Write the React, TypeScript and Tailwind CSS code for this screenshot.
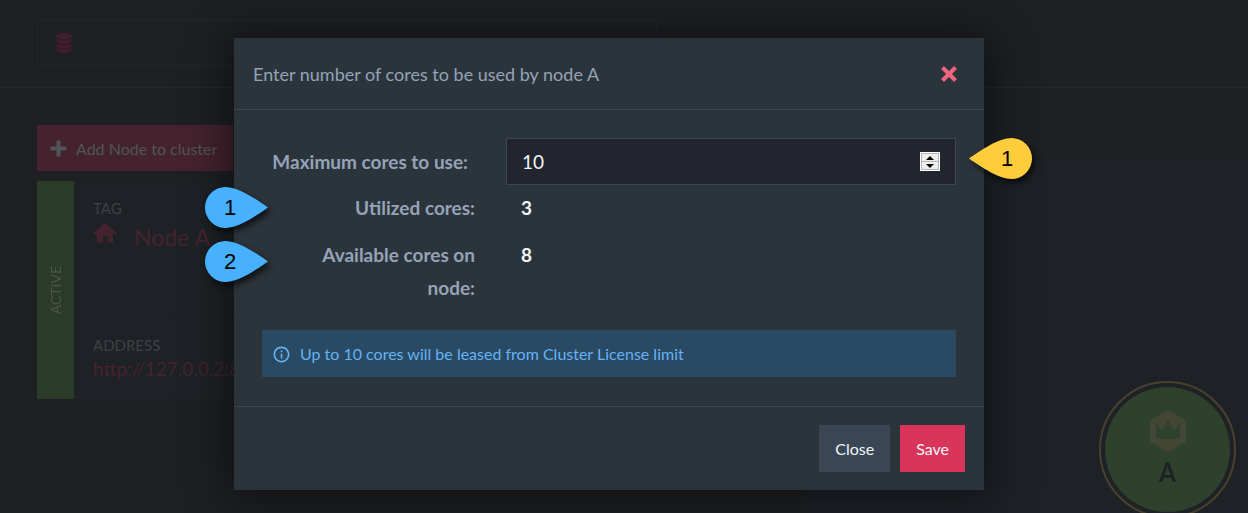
import { useState } from "react";
import type { ReactNode } from "react";
import { MdInfoOutline } from "react-icons/md";

function DatabaseIcon() {
  return (
    <svg viewBox="0 0 16 20" className="h-5 w-4" fill="currentColor" aria-hidden="true">
      <ellipse cx="8" cy="3.2" rx="7.8" ry="3.2" />
      <path d="M.2 5.2C2 6.800 5 7.400 8 7.400s6-.6 7.800-2.200v2.600C15.800 9.800 12 11 8 11S.2 9.800 .2 7.800z" />
      <path d="M.2 9.800C2 11.400 5 12 8 12s6-.6 7.800-2.200v2.600c0 2-3.800 3.200-7.800 3.200s-7.800-1.200-7.800-3.200z" />
      <path d="M.2 14.400C2 15.900 5 16.500 8 16.500s6-.6 7.800-2.100v2.400c0 2-3.800 3.200-7.800 3.200s-7.800-1.200-7.800-3.200z" />
    </svg>
  );
}

function PlusIcon() {
  return (
    <svg viewBox="0 0 17 17" className="size-[17px]" fill="currentColor" aria-hidden="true">
      <path d="M7 .5h3q.5 0 .5.500V6.500H16q.5 0 .5.500v3q0 .5-.5.500h-5.500V16q0 .5-.5.500H7q-.5 0-.5-.5v-5.500H1Q.5 10.500 .5 10V7q0-.5.5-.5h5.500V1q0-.5.5-.5z" />
    </svg>
  );
}

function HomeIcon() {
  return (
    <svg viewBox="0 0 24 20" className="h-5 w-6" fill="currentColor" aria-hidden="true">
      <path d="M12 0 24 10.500V11H20V19.500H14.500V13H10V19.500H4V11H0V10.500z" />
    </svg>
  );
}

function CrossIcon() {
  return (
    <svg viewBox="0 0 16 16" className="size-4 overflow-visible" fill="none" stroke="currentColor" strokeWidth="4" aria-hidden="true">
      <path d="M1.500 1.500 14.500 14.500M14.500 1.500 1.500 14.500" />
    </svg>
  );
}

function Callout({ label, place, tone, flip }: { label: string; place: string; tone: string; flip?: boolean }) {
  return (
    <div className={`absolute z-10 h-[41px] w-[63px] ${place}`}>
      <svg
        viewBox="0 0 63 41"
        className={`absolute inset-0 overflow-visible drop-shadow-[3px_4px_3px_rgba(0,0,0,0.65)] ${tone}`}
        fill="currentColor"
        aria-hidden="true"
      >
        {flip ? (
          <path d="M0 20.500C12 12 30 0 42.500 0a20.500 20.500 0 0 1 0 41C30 41 12 29 0 20.500z" />
        ) : (
          <path d="M63 20.500C51 12 33 0 20.500 0a20.500 20.500 0 0 0 0 41C33 41 51 29 63 20.500z" />
        )}
      </svg>
      <span
        className={`absolute inset-y-0 flex w-[50px] items-center justify-center font-['Liberation_Sans',sans-serif] text-[22px] font-normal text-black ${
          flip ? "right-0" : "left-0"
        }`}
      >
        {label}
      </span>
    </div>
  );
}

function InfoRow({ label, value, callout }: { label: string; value: string; callout: ReactNode }) {
  return (
    <div className="relative flex pt-[6px] pb-2 text-[19px] leading-[33px] font-bold">
      <dt className="w-[213px] pl-8 text-right text-[#94a3b8]">{label}</dt>
      <dd className="pl-[46px] text-[#f1f5f9]">{value}</dd>
      {callout}
    </div>
  );
}

function PageBehind() {
  return (
    <div className="flex min-h-screen flex-col" aria-hidden="true">
      <header className="border-b border-[#24272c] px-[37px] pt-5 pb-[21px]">
        <div className="flex h-[46px] max-w-[620px] items-center border border-[#22272d] pl-[18px] text-[#441c2c]">
          <DatabaseIcon />
        </div>
      </header>
      <main className="flex grow">
        <section className="w-[803px] px-[37px] pt-[37px]">
          <button
            type="button"
            tabIndex={-1}
            className="flex h-[46px] w-[196px] items-center gap-[9px] bg-[#45232e] pt-px pl-[13px] text-[16px] text-[#515456]"
          >
            <PlusIcon />
            Add Node to cluster
          </button>
          <article className="mt-[10px] flex h-[218px] bg-[#1e2226] text-[#3d4145]">
            <div className="flex w-[37px] items-center justify-center bg-[#2a3b2a] text-[#4b554c]">
              <span className="rotate-180 text-[14px] leading-5 [writing-mode:vertical-rl]">ACTIVE</span>
            </div>
            <div className="flex grow flex-col">
              <div className="h-[134px] border-b border-[#1d2024] pt-[15px] pl-[19px]">
                <div className="text-[15px] leading-6">TAG</div>
                <div className="flex items-start gap-[17px] pt-[3px] text-[23px] text-[#45232e]">
                  <HomeIcon />
                  <span className="leading-7">Node A</span>
                </div>
              </div>
              <div className="pt-[18px] pl-[19px]">
                <div className="text-[15px] leading-6">ADDRESS</div>
                <div className="text-[19px] leading-6 text-[#45232e]">http://127.0.0.2:8080</div>
              </div>
            </div>
          </article>
        </section>
        <section className="mt-[73px] flex grow items-end justify-end overflow-hidden bg-[#1e2227] pr-3">
          <div className="-mb-[5px] flex size-[137px] items-center justify-center rounded-full border-2 border-[#4a402e]">
            <div className="flex size-[125px] flex-col items-center rounded-full bg-[#2d412d] pt-[23px] text-[#1e2227]">
              <svg viewBox="0 0 36 42" className="h-[42px] w-9" aria-hidden="true">
                <path d="M18 0 36 10.500v21L18 42 0 31.500v-21z" fill="#424632" />
                <path d="M6 13.500 12 21 18 10.500 24 21 30 13.500V29H6z" fill="#2d412d" />
              </svg>
              <span className="mt-[3px] font-['Roboto',sans-serif] text-[27px] leading-9 font-medium">A</span>
            </div>
          </div>
        </section>
      </main>
    </div>
  );
}

export default function App() {
  const [cores, setCores] = useState(10);
  const step = (by: number) => setCores((n) => Math.max(0, n + by));

  return (
    <div className="relative min-h-screen overflow-hidden bg-[#1e2024] font-['Lato',sans-serif]">
      <PageBehind />
      <div className="absolute inset-0 flex items-start justify-center pt-[38px] pr-[30px]">
        <form
          role="dialog"
          aria-labelledby="dialog-title"
          className="w-[750px] bg-[#2c343b] shadow-[0_3px_40px_10px_rgba(0,0,0,0.45)]"
          onSubmit={(e) => e.preventDefault()}
        >
          <header className="flex h-[72px] items-center justify-between border-b border-[#3a4654] pr-[27px] pl-[19px]">
            <h2 id="dialog-title" className="pt-px text-[18px] text-[#94a3b8]">
              Enter number of cores to be used by node A
            </h2>
            <button type="button" aria-label="Close dialog" className="text-[#f0647f]">
              <CrossIcon />
            </button>
          </header>
          <div className="px-7 pt-7 pb-[29px]">
            <div className="relative flex items-center text-[19px]">
              <label htmlFor="cores" className="w-[206px] pt-0.5 text-right font-bold text-[#94a3b8]">
                Maximum cores to use:
              </label>
              <div className="ml-[38px] flex h-[47px] grow items-center border border-[#3a4654] bg-[#22252d] px-[15px]">
                <input
                  id="cores"
                  type="text"
                  inputMode="numeric"
                  value={cores}
                  onChange={(e) => setCores(Number(e.target.value) || 0)}
                  className="w-full bg-transparent pt-0.5 text-[#f1f5f9] outline-none"
                />
                <span className="flex h-[19px] w-5 shrink-0 flex-col border border-white bg-[#b5b5b5] p-px">
                  <button
                    type="button"
                    aria-label="Increase"
                    className="flex flex-1 items-center justify-center bg-[#eeeeee]"
                    onClick={() => step(1)}
                  >
                    <svg viewBox="0 0 8 4" className="h-1 w-2" aria-hidden="true">
                      <path d="M4 0 8 4H0z" />
                    </svg>
                  </button>
                  <button
                    type="button"
                    aria-label="Decrease"
                    className="mt-px flex flex-1 items-center justify-center bg-[#eeeeee]"
                    onClick={() => step(-1)}
                  >
                    <svg viewBox="0 0 8 4" className="h-1 w-2" aria-hidden="true">
                      <path d="M4 4 8 0H0z" />
                    </svg>
                  </button>
                </span>
              </div>
              <Callout label="1" place="top-0 -right-[76px]" tone="text-[#ffcd3c]" flip />
            </div>
            <dl>
              <InfoRow
                label="Utilized cores:"
                value="3"
                callout={<Callout label="1" place="top-[2px] -left-[57px]" tone="text-[#47b1ff]" />}
              />
              <InfoRow
                label="Available cores on node:"
                value="8"
                callout={<Callout label="2" place="top-[9px] -left-[57px]" tone="text-[#47b1ff]" />}
              />
            </dl>
            <div className="mt-[18px] flex h-[47px] items-center gap-[9px] bg-[#2a4a63] pt-px pl-[10px] text-[16px] text-[#63b3f5]">
              <MdInfoOutline className="size-[19px]" />
              Up to 10 cores will be leased from Cluster License limit
            </div>
          </div>
          <footer className="flex justify-end gap-[10px] border-t border-[#3a4654] px-[19px] py-[18px] text-[16px] text-[#f1f5f9]">
            <button type="button" className="h-[47px] bg-[#3a4655] px-4">
              Close
            </button>
            <button type="submit" className="h-[47px] bg-[#d93459] px-4">
              Save
            </button>
          </footer>
        </form>
      </div>
    </div>
  );
}
